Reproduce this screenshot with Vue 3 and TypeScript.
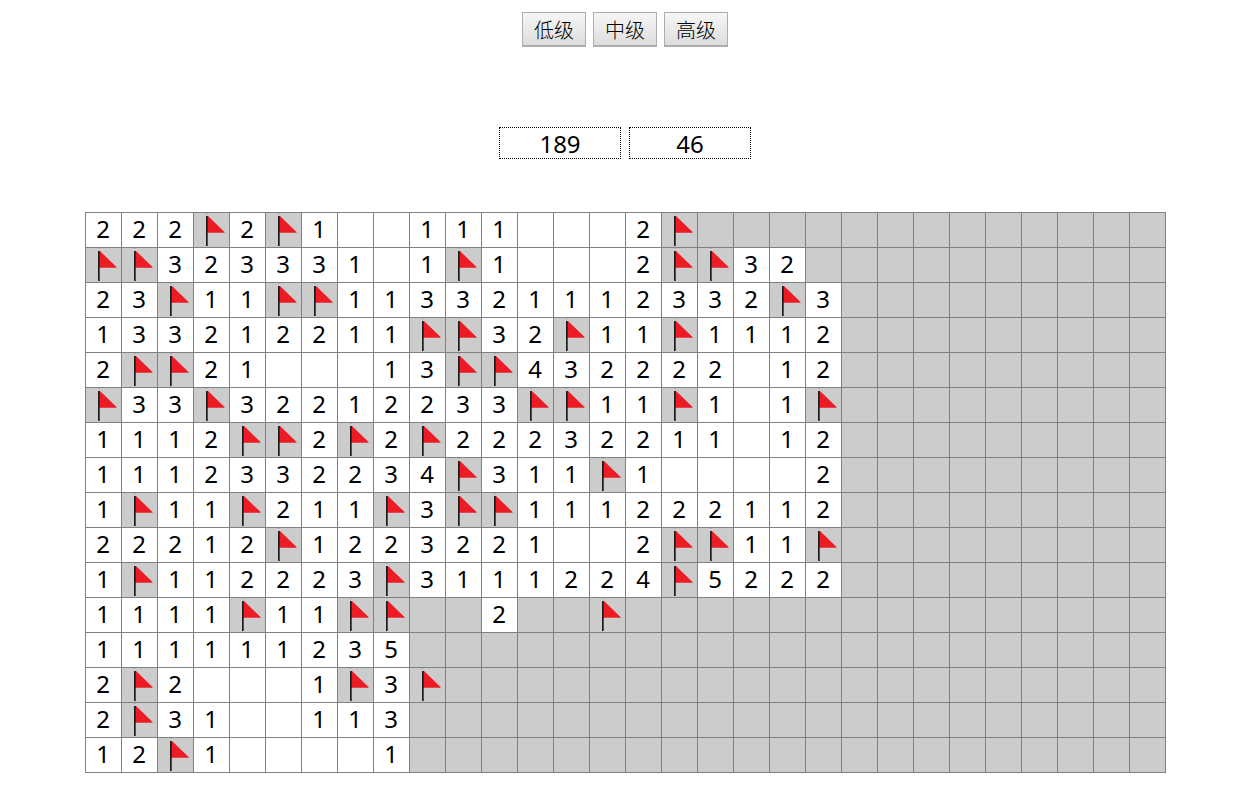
<script setup lang="ts">
import { ref } from 'vue'

type CellKind = 'hidden' | 'flagged' | 'open'
interface Cell {
  kind: CellKind
  text: string
}

const COLUMNS = 30
const levels: string[] = ['低级', '中级', '高级']
const seconds = ref(189)
const minesLeft = ref(46)

// F: flagged, dot: covered, 0: opened and empty. Rows are padded with covered cells.
const layout: string[] = [
  '222F2F1001110002F',
  'FF32333101F10002FF32',
  '23F11FF113321112332F3',
  '133212211FF32F11F1112',
  '2FF2100013FF432222012',
  'F33F32212233FF11F101F',
  '1112FF2F2F22232211012',
  '1112332234F311F100002',
  '1F11F211F3FF111222112',
  '22212F1223221002FF11F',
  '1F112223F3111224F5222',
  '1111F11FF..2..F',
  '111111235',
  '2F20001F3F',
  '2F3100113',
  '12F100001',
]

function toCell(code: string): Cell {
  if (code === 'F') return { kind: 'flagged', text: '' }
  if (code === '.') return { kind: 'hidden', text: '' }
  return { kind: 'open', text: code === '0' ? '' : code }
}

const board = ref<Cell[][]>(
  layout.map((row) => row.padEnd(COLUMNS, '.').split('').map(toCell)),
)
</script>

<template>
  <main class="game">
    <nav class="levels">
      <button v-for="level in levels" :key="level" type="button" class="level">{{ level }}</button>
    </nav>

    <div class="status">
      <output class="counter">{{ seconds }}</output>
      <output class="counter">{{ minesLeft }}</output>
    </div>

    <table class="board">
      <tbody>
        <tr v-for="(row, r) in board" :key="r">
          <td v-for="(cell, c) in row" :key="c" class="cell" :class="cell.kind">
            <svg v-if="cell.kind === 'flagged'" class="flag" viewBox="0 0 35 34" aria-hidden="true">
              <rect x="12" y="0" width="2" height="1" fill="#b4b4b4" />
              <path d="M13 3 L14 3 L30.5 19 V19.7 H13 Z" fill="#ed1c24" />
              <rect x="12" y="3" width="1.7" height="30" fill="#1c1c1c" />
            </svg>
            <template v-else>{{ cell.text }}</template>
          </td>
        </tr>
      </tbody>
    </table>
  </main>
</template>

<style>
body {
  margin: 0;
  background: #fff;
}
</style>

<style scoped>
.game {
  display: flex;
  flex-direction: column;
  align-items: center;
  padding: 12px 0 32px 2px;
  color: #000;
  font-family: "Noto Sans", "Noto Sans CJK SC", sans-serif;
}

.levels {
  display: flex;
  gap: 7px;
}

.level {
  box-sizing: border-box;
  height: 35px;
  padding: 2px 11px 0;
  border: 1px solid #adadad;
  border-bottom: 2px solid #adadad;
  border-radius: 0;
  background: linear-gradient(#f6f6f6, #dddddd);
  color: #000;
  font-family: "Noto Sans CJK SC", sans-serif;
  font-size: 20px;
  font-weight: 300;
  line-height: 30px;
}

.status {
  display: flex;
  gap: 8px;
  margin-top: 80px;
}

.counter {
  width: 120px;
  padding-top: 2px;
  border: 1px dotted #000;
  font-size: 24px;
  line-height: 28px;
  text-align: center;
}

.board {
  margin-top: 53px;
  border-collapse: collapse;
}

.cell {
  box-sizing: border-box;
  min-width: 36px;
  height: 35px;
  padding: 0;
  border: 1px solid #808080;
  font-size: 24px;
  line-height: 32px;
  text-align: center;
  vertical-align: top;
}

.hidden,
.flagged {
  background: #ccc;
}

.flag {
  display: block;
  width: 35px;
  height: 34px;
}
</style>
